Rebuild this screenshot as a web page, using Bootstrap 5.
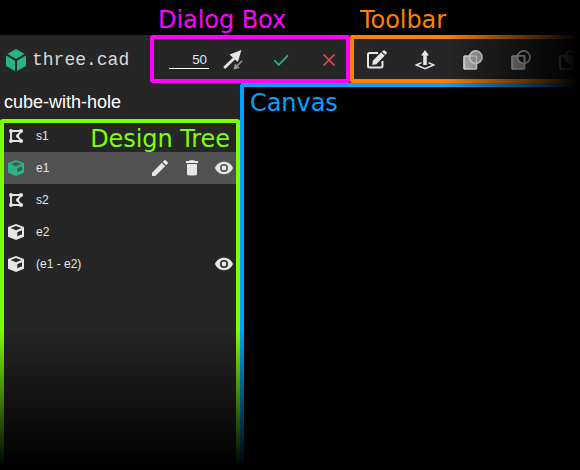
<!DOCTYPE html>
<html lang="en">
<head>
<meta charset="utf-8">
<title>three.cad</title>
<link rel="stylesheet" href="https://cdn.jsdelivr.net/npm/bootstrap@5.3.0/dist/css/bootstrap.min.css">
<style>
body{width:580px;height:470px;background:#000;color:#e6e6e6;font-family:"Liberation Sans",Arial,sans-serif;overflow:hidden}
.labels,.frame-label{font:24px/28px "DejaVu Sans",sans-serif;letter-spacing:-.06px}
.labels{height:35px;padding-top:6px}
.label-dialog{width:202px;margin-left:158px}
.pink{color:#f0f}.orange{color:#ff8000}.blue{color:#00a2ff}.green{color:#80ff00}
.topbar{height:48px;background:#262626}
.brand{width:150px;padding:2px 0 0 6px;font:18px/22px "Liberation Mono",monospace;color:#d9d9d9}
.brand svg{margin-right:6px}
.framed{position:relative}
.framed::after{content:"";position:absolute;inset:0;border:4px solid;border-radius:3px;pointer-events:none}
.dialog-box{width:200px;padding-top:2px}
.tools{width:230px;padding:2px 0 0 3px;overflow:hidden}
.slot{width:48px;height:46px;flex:none}
.amount{width:40px;height:19px;border:0;border-bottom:1px solid #fff;background:none;color:#e6e6e6;font:13.33px/18px "Liberation Sans",sans-serif;text-align:right;padding:0 2px 0 0;margin:-1px 0 0 19px;flex:none}
.side{width:240px;background:#262626}
.project{height:36px;padding:2px 0 0 4px;font-size:18px;color:#fff}
.tree{padding-top:1px}
.tree-items{color:#e6e6e6}
.tree-row{height:32px;padding:0 0 0 8px;font-size:12px;line-height:16px}
.tree-row.active-row{background:linear-gradient(90deg,transparent 4px,#525252 4px)}
.tree-row .name{margin-left:12px}
.tree-row .act{width:32px}
.tree-title{position:absolute;right:10px;top:6px}
.viewport{background:#000}
.viewport .frame-label{padding:6px 0 0 10px}
.framed.open-right::after{border-right:0}
.framed.open-bottom::after{border-bottom:0}
.fade-right{position:absolute;left:444px;top:35px;width:136px;height:54px;background:linear-gradient(90deg,transparent,#000 98%)}
.fade-bottom{position:absolute;left:0;top:328px;width:580px;height:142px;background:linear-gradient(transparent,#000 98%)}
svg{display:block;flex:none}
</style>
</head>
<body class="position-relative d-flex flex-column">
<svg width="0" height="0" class="position-absolute">
  <defs>
    <symbol id="sketch" viewBox="0 0 16 16"><path d="M3 3H13L9.500 8L13 13H3Z" fill="none" stroke="currentColor" stroke-width="1.900"/><g fill="currentColor"><circle cx="3" cy="3" r="2"/><circle cx="13" cy="3" r="2"/><circle cx="9.500" cy="8" r="1.700"/><circle cx="3" cy="13" r="2"/><circle cx="13" cy="13" r="2"/></g></symbol>
    <symbol id="solid" viewBox="0 0 16 16"><path fill="currentColor" fill-rule="evenodd" d="M8 0L16 3V12.800L8 16L0 12.800V3ZM8 2L2.700 4.100L8 6.200L13.300 4.100ZM9.300 8.300V12.300L14 10.200V6.300Z"/></symbol>
    <symbol id="eye" viewBox="0 0 18 14"><path fill="currentColor" fill-rule="evenodd" d="M9 .8C4.900.8 1.400 3.300 0 7c1.400 3.700 4.900 6.200 9 6.200s7.600-2.500 9-6.200C16.600 3.300 13.100.8 9 .8ZM9 11a4 4 0 1 1 0-8a4 4 0 0 1 0 8Z"/><circle cx="9" cy="7" r="2.400" fill="currentColor"/></symbol>
    <symbol id="pencil" viewBox="3 3 18 18"><path fill="currentColor" d="M3 17.250V21h3.750L17.810 9.940l-3.750-3.750L3 17.250zM20.710 7.040a1 1 0 0 0 0-1.410l-2.340-2.340a1 1 0 0 0-1.410 0l-1.830 1.830 3.750 3.750 1.830-1.830z"/></symbol>
    <symbol id="trash" viewBox="0 0 14 18"><path fill="currentColor" d="M2 5H12V14.700a1.800 1.800 0 0 1-1.800 1.800H3.800A1.800 1.800 0 0 1 2 14.700ZM4.700 1.200H9.300L10.100 2H13V3.900H1V2H3.900Z"/></symbol>
  </defs>
</svg>

<header class="labels d-flex flex-shrink-0">
  <div class="label-dialog pink">Dialog Box</div>
  <div class="orange">Toolbar</div>
</header>

<nav class="topbar d-flex flex-shrink-0">
  <div class="brand d-flex align-items-center flex-shrink-0">
    <svg width="20" height="22" viewBox="0 0 20 22" fill="#27b584"><path d="M10 0L18.500 4.800L10 9.900L1.500 4.800ZM0 6.500L9 11.700V22L0 17ZM20 6.500L11 11.700V22L20 17Z"/></svg>
    <span>three.cad</span>
  </div>
  <div class="dialog-box framed pink d-flex flex-shrink-0 align-items-center">
    <input class="amount" value="50" aria-label="Distance">
    <div class="slot d-flex align-items-center justify-content-center">
      <svg width="20" height="20" viewBox="0 0 20 20"><path d="M1.200 18L11 8.500" stroke="#e6e6e6" stroke-width="2.800"/><path d="M18.500 0L14.800 12L6.500 4.500Z" fill="#e6e6e6"/><path d="M19.200 10.800L13.500 16.500" stroke="#999" stroke-width="1.500"/><path d="M10.500 19.500L12 13.500L16.800 18Z" fill="#999"/></svg>
    </div>
    <div class="slot d-flex align-items-center justify-content-center">
      <svg width="16" height="16" viewBox="0 0 16 16" fill="none" stroke="#27b584" stroke-width="1.700"><path d="M1.200 8.200L5.800 12.800L15 3.400"/></svg>
    </div>
    <div class="slot d-flex align-items-center justify-content-center">
      <svg width="14" height="14" viewBox="0 0 14 14" stroke="#e5484d" stroke-width="1.600"><path d="M1.500 1.500L12.500 12.500M12.500 1.500L1.500 12.500"/></svg>
    </div>
  </div>
  <div class="tools framed open-right orange d-flex flex-shrink-0 align-items-center">
    <div class="slot d-flex align-items-center justify-content-center">
      <svg width="22" height="20" viewBox="0 0 22 20"><path d="M12 3H3.500Q2 3 2 4.500V16Q2 17.500 3.500 17.500H15Q16.500 17.500 16.500 16V11" fill="none" stroke="#e6e6e6" stroke-width="2"/><path d="M6.800 10.700L15.200 2.300L18.700 5.800L10.300 14.200L6.300 15ZM16 1.500L17.400.4Q18 0 18.700.5L20.700 2.300Q21.200 2.900 20.600 3.500L19.400 4.900Z" fill="#e6e6e6"/></svg>
    </div>
    <div class="slot d-flex align-items-center justify-content-center">
      <svg width="20" height="20" viewBox="0 0 20 20"><path d="M6.500 12.600L1.200 15L10 18.800L18.800 15L13.500 12.600" fill="none" stroke="#e6e6e6" stroke-width="1.500"/><path d="M10 0L14 5.500H11.800V15H8.200V5.500H6Z" fill="#e6e6e6"/></svg>
    </div>
    <div class="slot d-flex align-items-center justify-content-center">
      <svg width="20" height="20" viewBox="0 0 20 20" stroke="#f0f0f0" stroke-width="1.700"><rect x="1" y="6" width="12.500" height="13" rx="1" fill="#c0c0c0"/><circle cx="12.700" cy="7.200" r="6.300" fill="#b0b0b0"/><path d="M6.400 6H13.500V13.400" fill="none" stroke-width="1.200"/></svg>
    </div>
    <div class="slot d-flex align-items-center justify-content-center">
      <svg width="20" height="20" viewBox="0 0 20 20" stroke="#f0f0f0" stroke-width="1.700"><rect x="1" y="6" width="12.500" height="13" rx="1" fill="#b8b8b8"/><path d="M6.400 6H13.500V13.400A6.300 6.300 0 0 1 6.400 6Z" fill="#262626"/><circle cx="12.700" cy="7.200" r="6.300" fill="none"/></svg>
    </div>
    <div class="slot d-flex align-items-center justify-content-center">
      <svg width="20" height="20" viewBox="0 0 20 20" stroke="#f0f0f0" stroke-width="1.700"><rect x="1" y="6" width="12.500" height="13" rx="1" fill="none"/><circle cx="12.700" cy="7.200" r="6.300" fill="none"/><path d="M6.400 6H13.500V13.400A6.300 6.300 0 0 1 6.400 6Z" fill="#b8b8b8"/></svg>
    </div>
  </div>
</nav>

<main class="d-flex flex-grow-1">
  <aside class="side d-flex flex-column flex-shrink-0">
    <div class="project d-flex align-items-center">cube-with-hole</div>
    <div class="tree framed open-bottom green flex-grow-1">
      <div class="frame-label tree-title">Design Tree</div>
      <div class="tree-items">
        <div class="tree-row d-flex align-items-center"><svg width="16" height="16"><use href="#sketch"/></svg><span class="name">s1</span></div>
        <div class="tree-row active-row d-flex align-items-center">
          <svg width="16" height="16" color="#27b584"><use href="#solid"/></svg><span class="name me-auto">e1</span>
          <span class="act d-flex justify-content-center"><svg width="16" height="16"><use href="#pencil"/></svg></span>
          <span class="act d-flex justify-content-center"><svg width="14" height="18"><use href="#trash"/></svg></span>
          <span class="act d-flex justify-content-center"><svg width="18" height="14"><use href="#eye"/></svg></span>
        </div>
        <div class="tree-row d-flex align-items-center"><svg width="16" height="16"><use href="#sketch"/></svg><span class="name">s2</span></div>
        <div class="tree-row d-flex align-items-center"><svg width="16" height="16"><use href="#solid"/></svg><span class="name">e2</span></div>
        <div class="tree-row d-flex align-items-center"><svg width="16" height="16"><use href="#solid"/></svg><span class="name me-auto">(e1 - e2)</span><span class="act d-flex justify-content-center"><svg width="18" height="14"><use href="#eye"/></svg></span></div>
      </div>
    </div>
  </aside>
  <section class="viewport framed open-right open-bottom blue flex-grow-1">
    <div class="frame-label">Canvas</div>
  </section>
</main>
<div class="fade-right"></div>
<div class="fade-bottom"></div>
<script src="https://cdn.jsdelivr.net/npm/bootstrap@5.3.0/dist/js/bootstrap.bundle.min.js"></script>
</body>
</html>
